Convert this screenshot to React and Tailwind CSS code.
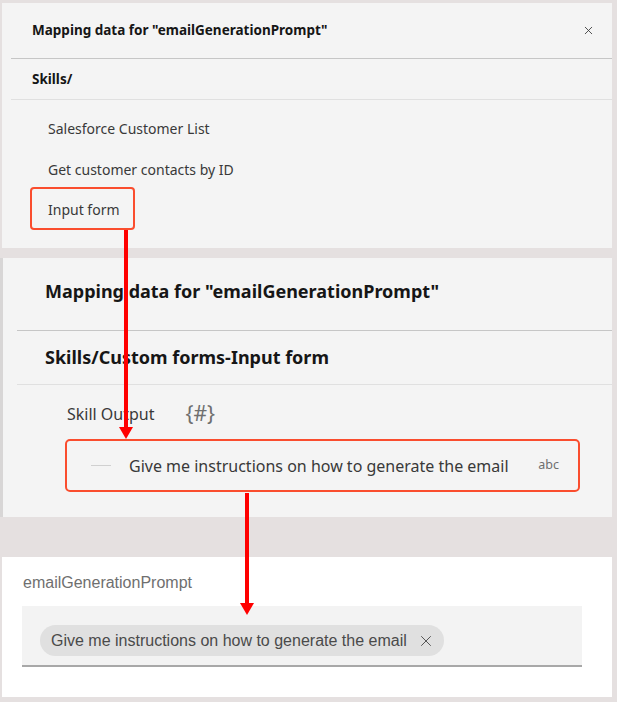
import { X } from 'lucide-react';

const plex = { fontFamily: '"Noto Sans", "Open Sans", sans-serif' };

function Arrows() {
    // red annotation arrows drawn over the panels
    return (
        <svg className="pointer-events-none absolute inset-0" width="617" height="702" viewBox="0 0 617 702">
            <line x1="126" y1="230" x2="126" y2="429" stroke="#ff0000" strokeWidth="4" />
            <polygon points="119,427 133,427 126,439" fill="#ff0000" />
            <line x1="247" y1="493" x2="247" y2="605" stroke="#ff0000" strokeWidth="4" />
            <polygon points="240,603 254,603 247,615" fill="#ff0000" />
        </svg>
    );
}

export default function App() {
    return (
        <div className="relative h-[702px] w-[617px] overflow-hidden bg-[#e5e0e0] pt-[3px]" style={plex}>
            {/* Panel 1 */}
            <div className="ml-[2px] h-[245px] w-[610px] bg-[#f4f4f4]">
                <div className="ml-[9px] flex h-[56px] items-center justify-between border-b border-[#c6c6c6] pl-[21px] pr-[17px]">
                    <span className="text-[13.5px] font-bold text-[#161616]">Mapping data for "emailGenerationPrompt"</span>
                    <X size={13} strokeWidth={1.6} className="text-[#393939]" />
                </div>
                <div className="ml-[9px] flex h-[41px] items-center border-b border-[#e0e0e0] pl-[21px]">
                    <span className="text-[13.5px] font-bold text-[#161616]">Skills/</span>
                </div>
                <div className="pt-[8px] text-[14px] text-[#393939]">
                    <div className="flex h-[41px] items-center pl-[46px]">Salesforce Customer List</div>
                    <div className="flex h-[41px] items-center pl-[46px]">Get customer contacts by ID</div>
                    <div className="-mt-[3px] ml-[28px] flex h-[43px] w-[105px] items-center rounded-[4px] border-2 border-[#fa4d2e] pl-[16px] pt-[1px]">
                        Input form
                    </div>
                </div>
            </div>

            {/* Panel 2 */}
            <div className="mt-[10px] h-[259px] w-[612px] border-l-[3px] border-[#d8d6d6] bg-[#f4f4f4]">
                <div className="ml-[14px] flex h-[73px] items-center border-b border-[#c6c6c6] pb-[5px] pl-[28px]">
                    <span className="text-[18px] font-bold text-[#161616]">Mapping data for "emailGenerationPrompt"</span>
                </div>
                <div className="ml-[14px] flex h-[54px] items-center border-b border-[#e0e0e0] pl-[28px]">
                    <span className="text-[18px] font-bold text-[#161616]">Skills/Custom forms-Input form</span>
                </div>
                <div className="mt-[17px] flex h-[24px] items-center pl-[64px]">
                    <span className="text-[16px] text-[#393939]">Skill Output</span>
                    <span className="ml-[31px] text-[21px] text-[#6f6f6f]">{'{#}'}</span>
                </div>
                <div className="ml-[62px] mt-[13px] flex h-[53px] w-[515px] items-center rounded-[5px] border-2 border-[#fa4d2e] pl-[24px] pr-[19px]">
                    <div className="h-px w-[20px] bg-[#d0d0d0]" />
                    <span className="ml-[18px] text-[16px] text-[#393939]">Give me instructions on how to generate the email</span>
                    <span className="ml-auto text-[12.5px] text-[#6f6f6f]">abc</span>
                </div>
            </div>

            {/* Panel 3 */}
            <div
                className="ml-[2px] mt-[40px] h-[140px] w-[610px] bg-white pl-[20px] pt-[16px]"
                style={{ fontFamily: '"Liberation Sans", Arial, sans-serif' }}
            >
                <div className="pl-[1px] text-[16px] leading-[20px] text-[#6f6f6f]">emailGenerationPrompt</div>
                <div className="mt-[13px] h-[61px] w-[560px] border-b-2 border-[#a8a8a8] bg-[#f3f3f3] pl-[18px] pt-[19px]">
                    <div className="inline-flex h-[31px] items-center rounded-full bg-[#e0e0e0] pl-[11px] pr-[9px]">
                        <span className="text-[16px] text-[#4a4a4a]">Give me instructions on how to generate the email</span>
                        <X size={18} strokeWidth={1.3} className="ml-[10px] text-[#525252]" />
                    </div>
                </div>
            </div>

            <Arrows />
        </div>
    );
}
